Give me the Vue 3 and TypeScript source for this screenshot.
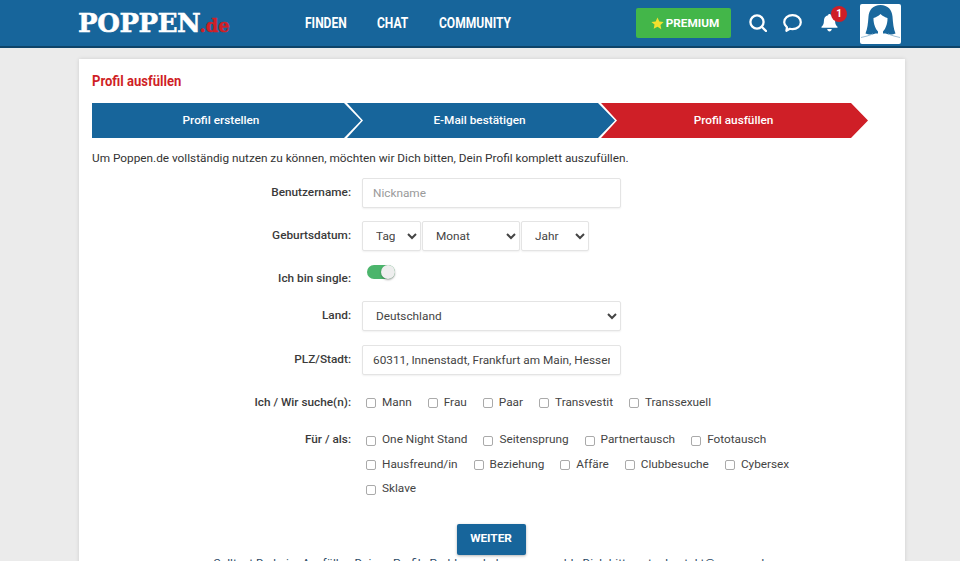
<script setup lang="ts">
const seeking = ['Mann', 'Frau', 'Paar', 'Transvestit', 'Transsexuell']
const purposes = ['One Night Stand', 'Seitensprung', 'Partnertausch', 'Fototausch', 'Hausfreund/in', 'Beziehung', 'Affäre', 'Clubbesuche', 'Cybersex', 'Sklave']
const steps = ['Profil erstellen', 'E-Mail bestätigen', 'Profil ausfüllen']
</script>

<template>
  <div class="page">
    <header class="top">
      <div class="logo">POPPEN<span class="tld">.de</span></div>
      <nav class="nav">
        <a class="n1">FINDEN</a><a class="n2">CHAT</a><a class="n3">COMMUNITY</a>
      </nav>
      <div class="tools">
        <button class="premium">
          <svg width="13" height="13" viewBox="0 0 24 24"><path fill="#f2e02e" d="M12 1l3.400 7.300 7.900 1-5.800 5.500 1.500 7.900L12 18l-7 3.700 1.500-7.900L.7 9.300l7.900-1z"/></svg>
          PREMIUM
        </button>
        <svg class="ico search" width="18" height="18" viewBox="0 0 18 18" fill="none" stroke="#fff" stroke-width="2.300"><circle cx="8" cy="8" r="6.600"/><path d="M13 13l4 4" stroke-linecap="round"/></svg>
        <svg class="ico chat" width="19" height="18" viewBox="0 0 19 18" fill="none" stroke="#fff" stroke-width="2.200"><path d="M9.500 1.200c4.600 0 8.300 3 8.300 7s-3.700 7-8.300 7c-1 0-1.900-.1-2.700-.4l-3.400 2 .6-3.500C2.400 12 1.200 10.200 1.200 8.200c0-4 3.700-7 8.300-7z" stroke-linejoin="round"/></svg>
        <div class="bell">
          <svg width="17" height="18" viewBox="0 0 17 18"><path fill="#fff" d="M8.500 0c.8 0 1.300.5 1.400 1.200 3 .6 4.200 3 4.200 5.800 0 3 .9 4.400 2.400 5.700v1.100H.5v-1.100C2 11.400 2.900 10 2.900 7c0-2.800 1.200-5.200 4.200-5.800C7.200.5 7.700 0 8.500 0z"/><path fill="#fff" d="M6.200 15h4.600c-.2 1.500-1.100 2.400-2.300 2.400S6.400 16.500 6.200 15z"/></svg>
          <span class="badge">1</span>
        </div>
        <div class="avatar">
          <svg width="41" height="40" viewBox="0 0 41 40">
            <rect width="41" height="40" fill="#fff"/>
            <path fill="#1a689d" d="M20.500 1C13 1 9 6 8.500 12.500 8 19 7.500 25 5.500 29.500c3 1.500 7 1.500 10 0h10c3 1.500 7 1.500 10 0-2-4.500-2.500-10.500-3-17C32 6 28 1 20.500 1z"/>
            <path fill="#fff" d="M20.500 10c-2 2-5 3.500-7 4-.3 6 2.500 11.500 4.500 13.500v3l-2 2h9l-2-2v-3c2-2 4.800-7.500 4.500-13.500-2-.5-5-2-7-4z"/>
            <path fill="none" stroke="#9dbfd6" stroke-width="1" d="M1 33.500c4-.7 8-2 12-3.500M40 33.500c-4-.7-8-2-12-3.500"/>
          </svg>
        </div>
      </div>
    </header>

    <main class="card">
      <h1 class="title">Profil ausfüllen</h1>
      <ol class="steps">
        <li v-for="(s, i) in steps" :key="s" class="step" :class="{ first: i === 0, active: i === 2 }">{{ s }}</li>
      </ol>
      <p class="intro">Um Poppen.de vollständig nutzen zu können, möchten wir Dich bitten, Dein Profil komplett auszufüllen.</p>

      <form class="form" @submit.prevent>
        <div class="row r-name">
          <label>Benutzername:</label>
          <input class="ctl wide" placeholder="Nickname" />
        </div>
        <div class="row r-date">
          <label>Geburtsdatum:</label>
          <div class="dates">
            <select class="ctl tag"><option>Tag</option></select>
            <select class="ctl monat"><option>Monat</option></select>
            <select class="ctl jahr"><option>Jahr</option></select>
          </div>
        </div>
        <div class="row r-single">
          <label>Ich bin single:</label>
          <span class="toggle"><i></i></span>
        </div>
        <div class="row r-land">
          <label>Land:</label>
          <select class="ctl wide"><option>Deutschland</option></select>
        </div>
        <div class="row r-plz">
          <label>PLZ/Stadt:</label>
          <input class="ctl wide city" value="60311, Innenstadt, Frankfurt am Main, Hessen" />
        </div>
        <div class="row r-seek">
          <label>Ich / Wir suche(n):</label>
          <div class="checks">
            <span v-for="o in seeking" :key="o" class="check"><input type="checkbox" />{{ o }}</span>
          </div>
        </div>
        <div class="row r-for">
          <label>Für / als:</label>
          <div class="checks">
            <span v-for="o in purposes" :key="o" class="check"><input type="checkbox" />{{ o }}</span>
          </div>
        </div>
        <div class="submit"><button class="weiter">WEITER</button></div>
        <p class="help">Solltest Du beim Ausfüllen Deines Profils Probleme bekommen, melde Dich bitte unter kontakt@poppen.de</p>
      </form>
    </main>
  </div>
</template>

<style>
html, body { margin: 0; height: 100%; overflow: hidden; background: #ebebeb; }
</style>

<style scoped>
.page { height: 561px; overflow: hidden; background: #ebebeb; font-family: Roboto, "Liberation Sans", sans-serif; color: #333; font-size: 11.800px; }
.top { height: 46px; background: #17659b; border-bottom: 2px solid #0e4469; display: flex; align-items: center; padding: 0 59px 0 78px; }
.logo { width: 227px; flex: none; font-family: "DejaVu Serif", serif; font-weight: 700; font-size: 26px; color: #fff; letter-spacing: -.4px; -webkit-text-stroke: .5px #fff; white-space: nowrap; }
.tld { color: #cf1f27; font-size: 18px; letter-spacing: 0; margin-left: -1px; -webkit-text-stroke: .5px #cf1f27; }
.nav { display: flex; gap: 31px; }
.nav a { color: #fff; font-weight: 700; font-size: 14.500px; display: block; transform: scaleX(.83); transform-origin: left center; white-space: nowrap; }
.n1 { width: 41px; }
.n2 { width: 31px; }
.n3 { width: 71px; }
.tools { margin-left: auto; display: flex; align-items: center; }
.premium { width: 95px; height: 30px; background: #43b649; border: 0; border-radius: 2px; color: #fff; font: 700 11.800px Roboto, sans-serif; display: flex; align-items: center; justify-content: center; gap: 2px; padding: 0 0 0 3px; }
.search { margin-left: 18px; }
.chat { margin-left: 16px; }
.bell { position: relative; margin-left: 19px; width: 17px; height: 18px; }
.bell svg { display: block; }
.badge { position: absolute; left: 10px; top: -8px; width: 16px; height: 16px; border-radius: 50%; background: #ce1f27; color: #fff; font-size: 10px; font-weight: 700; line-height: 16px; text-align: center; }
.avatar { margin-left: 22px; width: 41px; height: 40px; margin-top: 1px; border-radius: 2px; overflow: hidden; }
.avatar svg { display: block; }
.card { margin: 11px 55px 0 79px; background: #fff; padding: 13px 13px; height: 520px; box-shadow: 0 0 4px rgba(0,0,0,.12); }
.title { margin: 0; font-size: 15px; font-weight: 700; color: #cf1f27; line-height: 18px; transform: scaleX(.87); transform-origin: left center; }
.steps { list-style: none; margin: 13px 0 0; padding: 0; display: flex; }
.step { width: 268px; height: 35px; line-height: 35px; margin-right: -14px; padding-right: 3px; box-sizing: border-box; text-align: center; color: #fff; font-weight: 500; background: #17659b; clip-path: polygon(0 0, calc(100% - 17px) 0, 100% 50%, calc(100% - 17px) 100%, 0 100%, 16px 50%); }
.step.first { width: 269px; padding-right: 11px; clip-path: polygon(0 0, calc(100% - 17px) 0, 100% 50%, calc(100% - 17px) 100%, 0 100%); }
.step.active { width: 267px; padding-right: 2px; background: #cf1f27; }
.intro { margin: 13px 0 0; line-height: 15px; }
.row { display: flex; align-items: flex-start; }
.row label { width: 270px; flex: none; padding-right: 11px; box-sizing: border-box; text-align: right; font-weight: 500; line-height: 15px; color: #3a3a3a; }
.ctl { box-sizing: border-box; height: 30px; border: 1px solid #e4e4e4; border-radius: 2px; background: #fff; font: 11.800px Roboto, sans-serif; color: #444; box-shadow: 0 1px 2px rgba(0,0,0,.06); outline: none; }
.ctl::placeholder { color: #9a9a9a; }
.wide { width: 259px; }
input.ctl { padding: 0 10px; }
select.ctl { padding: 0 9px; }
.r-name { margin-top: 12px; }
.r-name label { padding-top: 7px; }
.r-date { margin-top: 13px; }
.r-date label { padding-top: 7px; }
.dates { display: flex; gap: 1px; }
.tag { width: 59px; }
.monat { width: 98px; }
.jahr { width: 68px; }
.r-single { margin-top: 14px; height: 33px; }
.r-single label { padding-top: 6px; }
.toggle { display: block; margin: 0 0 0 5px; width: 28px; height: 14px; border-radius: 7px; background: #4cb56c; position: relative; }
.toggle i { position: absolute; right: 0; top: 0; width: 14px; height: 14px; border-radius: 50%; background: #eee; box-shadow: 0 1px 2px rgba(0,0,0,.35); }
.r-land { margin-top: 3px; }
.r-land label { padding-top: 7px; }
.r-plz { margin-top: 14px; }
.r-plz label { padding-top: 7px; }
.r-seek { margin-top: 15px; }
.r-for { margin-top: 13px; }
.checks { display: flex; flex-wrap: wrap; width: 470px; padding-left: 4px; box-sizing: border-box; }
.check { display: inline-flex; align-items: center; height: 24.500px; margin-right: 16px; color: #444; line-height: 15px; }
.check input { width: 10px; height: 10px; margin: 2px 6px 0 0; appearance: none; border: 1px solid #aaa; border-radius: 2px; background: #fff; }
.r-seek label { padding-top: 5px; }
.r-for label { padding-top: 4px; }
.submit { text-align: center; margin-top: 23px; padding-right: 2px; }
.weiter { width: 69px; height: 31px; background: #17659b; color: #fff; border: 0; border-radius: 2px; font: 700 11.800px Roboto, sans-serif; box-shadow: 0 1px 3px rgba(0,0,0,.3); padding: 0 0 3px; }
.help { margin: 1px 0 0; text-align: center; line-height: 15px; color: #2b4a66; }
</style>
